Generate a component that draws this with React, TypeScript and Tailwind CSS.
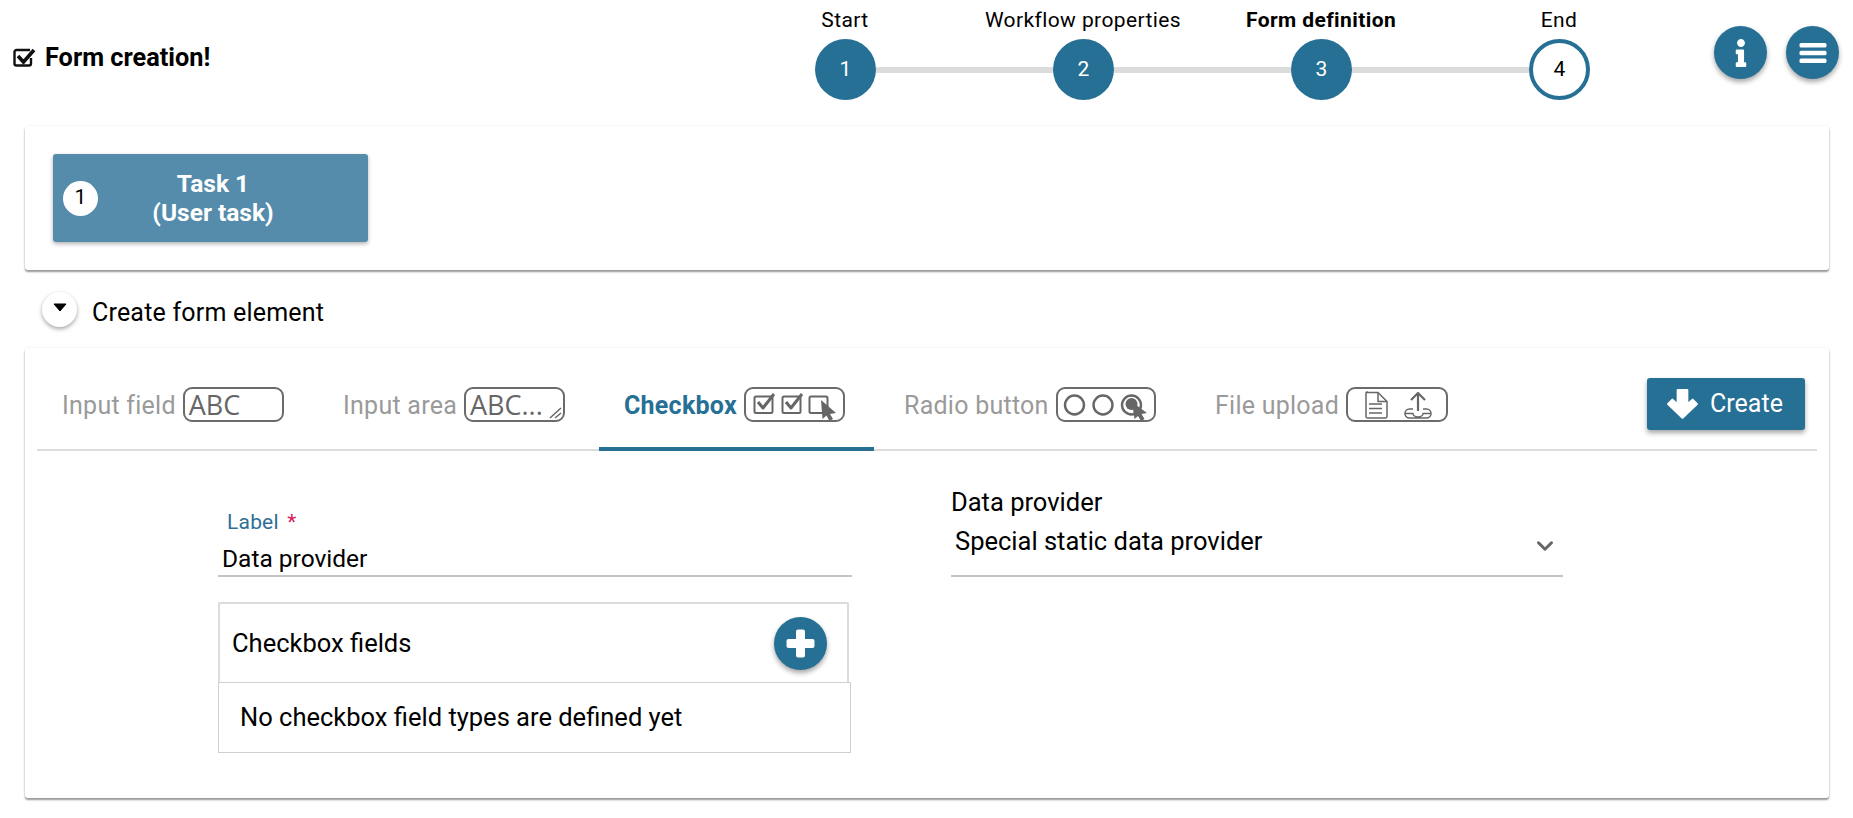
import { FC, ReactNode } from "react";
import { FaInfo } from "react-icons/fa";
import { LuChevronDown } from "react-icons/lu";

const steps = [
  { label: "Start", n: 1, done: true },
  { label: "Workflow properties", n: 2, done: true },
  { label: "Form definition", n: 3, done: true, bold: true },
  { label: "End", n: 4, done: false },
];

const Stepper: FC = () => (
  <div className="w-[952px] shrink-0 pt-[8px]">
    <div className="grid grid-cols-4 h-[31px]">
      {steps.map((s) => (
        <div
          key={s.n}
          className={`text-center text-[21px] tracking-[0.4px] leading-[24px] text-black whitespace-nowrap ${s.bold ? "font-bold" : ""}`}
        >
          {s.label}
        </div>
      ))}
    </div>
    <div className="flex items-center pl-[89px] pr-[88px]">
      {steps.map((s, i) => (
        <div key={s.n} className={`flex items-center ${i < 3 ? "flex-1" : ""}`}>
          <div
            className={`w-[61px] h-[61px] rounded-full flex items-center justify-center text-[21px] shrink-0 ${
              s.done ? "bg-[#266f95] text-white" : "bg-white border-[4px] border-[#266f95] text-black"
            }`}
          >
            {s.n}
          </div>
          {i < 3 && <div className="flex-1 h-[6px] bg-[#dcdcdc]" />}
        </div>
      ))}
    </div>
  </div>
);

const RoundButton: FC<{ children: ReactNode }> = ({ children }) => (
  <button className="w-[53px] h-[53px] rounded-full bg-[#266f95] text-white flex items-center justify-center shadow-[0_3px_5px_rgba(0,0,0,0.35)] shrink-0">
    {children}
  </button>
);

const IconBox: FC<{ width: string; children: ReactNode }> = ({ width, children }) => (
  <div className={`${width} relative h-[35px] border-[2px] border-[#6b6b6b] rounded-[9px] flex items-center text-[#666] shrink-0 overflow-hidden`}>
    {children}
  </div>
);

const line = { fill: "none", stroke: "#666", strokeWidth: 2, strokeLinejoin: "round" as const };
const thin = { fill: "none", stroke: "#666", strokeWidth: 1.5, strokeLinejoin: "round" as const };

const CheckboxIcon = () => (
  <svg viewBox="2 2 97 31" className="w-full h-full block">
    <rect x="10.5" y="9.5" width="18" height="16.5" rx="1.5" {...line} />
    <path d="M14 15 l5 6 l11 -14" {...line} strokeWidth={3} />
    <rect x="38.5" y="9.5" width="18" height="16.5" rx="1.5" {...line} />
    <path d="M42 15 l5 6 l11 -14" {...line} strokeWidth={3} />
    <rect x="65.5" y="9.5" width="18" height="16.5" rx="1.5" {...line} />
    <path d="M77 13 L92 26 L86 27 L89 32 L85.5 34 L82.5 28.5 L78.5 32 Z" fill="#666" />
  </svg>
);

const RadioIcon = () => (
  <svg viewBox="2 2 96 31" className="w-full h-full block">
    <circle cx="18.5" cy="18" r="9.5" {...line} strokeWidth={2.4} />
    <circle cx="47" cy="18" r="9.5" {...line} strokeWidth={2.4} />
    <circle cx="75.5" cy="18" r="9.5" {...line} strokeWidth={2.4} />
    <circle cx="75.5" cy="17" r="6" fill="#666" />
    <path d="M76 15 L91 26 L85.5 27 L88.5 32 L85 34 L82 29 L78.5 32 Z" fill="#666" />
  </svg>
);

const UploadIcon = () => (
  <svg viewBox="2 2 98 31" className="w-full h-full block">
    <path d="M20 5.5 h12 l9 9 v15 a1.5 1.5 0 0 1 -1.5 1.5 h-18 a1.5 1.5 0 0 1 -1.5 -1.5 v-23 a1.5 1.5 0 0 1 1.5 -1.5 Z" {...thin} />
    <path d="M32 5.5 v9 h9" {...thin} />
    <path d="M23 17 h13 M23 21.5 h13 M23 26 h13" {...thin} strokeWidth={1.4} />
    <path d="M72 24 V6 M65 13 l7 -7 l7 7" {...line} strokeWidth={2.2} />
    <path d="M67 22 h-3.5 a4.5 4.5 0 0 0 -4.5 4.5 a4.5 4.5 0 0 0 4.5 4.5 h17 a4.5 4.5 0 0 0 4.5 -4.5 a4.5 4.5 0 0 0 -4.5 -4.5 h-3.5 M59 26.5 h8 a5 3.5 0 0 0 10 0 h8" {...thin} />
  </svg>
);

const AbcIcon = () => (
  <IconBox width="w-[101px]">
    <span className="pl-[4px] text-[27px] leading-none font-['Open_Sans',sans-serif]">ABC</span>
  </IconBox>
);

const AbcAreaIcon = () => (
  <IconBox width="w-[101px]">
    <span className="pl-[4px] text-[27px] leading-none font-['Open_Sans',sans-serif]">ABC...</span>
    <svg width="14" height="14" viewBox="0 0 14 14" className="absolute right-[1px] bottom-[1px]">
      <path d="M2 13 L13 3 M7 13 L13 8" {...thin} />
    </svg>
  </IconBox>
);

const tabs: { label: string; width: string; gap: string; active?: boolean; icon: ReactNode }[] = [
  { label: "Input field", width: "w-[281px]", gap: "pl-[25px]", icon: <AbcIcon /> },
  { label: "Input area", width: "w-[281px]", gap: "pl-[25px]", icon: <AbcAreaIcon /> },
  {
    label: "Checkbox",
    width: "w-[275px]",
    gap: "pl-[25px]",
    active: true,
    icon: (
      <IconBox width="w-[101px]">
        <CheckboxIcon />
      </IconBox>
    ),
  },
  {
    label: "Radio button",
    width: "w-[306px]",
    gap: "pl-[30px]",
    icon: (
      <IconBox width="w-[100px]">
        <RadioIcon />
      </IconBox>
    ),
  },
  {
    label: "File upload",
    width: "w-[290px]",
    gap: "pl-[35px]",
    icon: (
      <IconBox width="w-[102px]">
        <UploadIcon />
      </IconBox>
    ),
  },
];

const Tabs: FC = () => (
  <div className="mx-[12px] h-[103px] border-b-[2px] border-[#dcdcdc] flex">
    {tabs.map((t) => (
      <div
        key={t.label}
        className={`${t.width} ${t.gap} pt-[39px] h-[103px] shrink-0 flex items-start gap-[7px] ${
          t.active ? "border-b-[4px] border-[#266f95]" : ""
        }`}
      >
        <span
          className={`text-[25px] tracking-[0.25px] leading-[34px] mt-[2px] whitespace-nowrap ${
            t.active ? "font-bold text-[#266f95]" : "text-[#9a9a9a]"
          }`}
        >
          {t.label}
        </span>
        {t.icon}
      </div>
    ))}
    <div className="flex-1 flex justify-end pt-[30px] pr-[12px]">
      <button className="w-[158px] h-[52px] pr-[3px] bg-[#266f95] rounded-[3px] text-white text-[25px] flex items-center justify-center gap-[11px] shadow-[0_3px_5px_rgba(0,0,0,0.35)]">
        <svg width="33" height="32" viewBox="0 0 31 30">
          <path d="M15.5 28 L2 15 L6 11 L11 15.5 V2 H20 V15.5 L25 11 L29 15 Z" fill="#fff" stroke="#fff" strokeWidth="2" strokeLinejoin="round" />
        </svg>
        Create
      </button>
    </div>
  </div>
);

const FormBody: FC = () => (
  <div className="pl-[193px] pt-[59px] flex">
    <div className="w-[634px] shrink-0">
      <div className="text-[21px] leading-[24px] text-[#2f6f95] pl-[9px] tracking-[0.2px]">
        Label <span className="text-[#d2225a] pl-[3px]">*</span>
      </div>
      <div className="h-[43px] pl-[4px] pt-[11px] text-[24.5px] leading-[28px] text-black border-b-[2px] border-[#c4c4c4]">
        Data provider
      </div>
      <div className="w-[631px] mt-[25px] h-[80px] border-[2px] border-b-0 border-[#dcdcdc] rounded-t-[2px] flex items-center justify-between pl-[12px] pr-[20px]">
        <span className="text-[25.5px] text-black">Checkbox fields</span>
        <RoundButton>
          <svg width="29" height="29" viewBox="0 0 29 29" fill="#fff">
            <rect x="10" y="0.5" width="9" height="28" rx="2" />
            <rect x="0.5" y="10" width="28" height="9" rx="2" />
          </svg>
        </RoundButton>
      </div>
      <div className="w-[633px] h-[71px] border border-[#cfcfcf] flex items-center pl-[21px] text-[25.5px] text-black whitespace-nowrap">
        No checkbox field types are defined yet
      </div>
    </div>
    <div className="ml-[99px] w-[612px] -mt-[22px] shrink-0">
      <div className="text-[25.5px] leading-[28px] text-black">Data provider</div>
      <div className="h-[61px] border-b-[2px] border-[#c4c4c4] flex justify-between pl-[4px] pr-[5px] pt-[11px]">
        <span className="text-[25.5px] leading-[28px] text-black">Special static data provider</span>
        <LuChevronDown className="w-[26px] h-[26px] text-[#666] mt-[6px]" strokeWidth={2.8} />
      </div>
    </div>
  </div>
);

export default function App() {
  return (
    <div className="w-[1853px] h-[818px] bg-white font-['Roboto',sans-serif] overflow-hidden">
      <header className="h-[126px] flex">
        <div className="w-[726px] shrink-0 flex items-start pt-[44px] pl-[13px] gap-[9px]">
          <svg width="23" height="20" viewBox="0 0 23 20" className="mt-[3px] shrink-0">
            <path d="M17 3 H3.5 A2 2 0 0 0 1.5 5 V16.5 A2 2 0 0 0 3.5 18.5 H16 A2 2 0 0 0 18 16.5 V11" fill="none" stroke="#111" strokeWidth="2.4" />
            <path d="M5 9 L10.5 15 L21 3" fill="none" stroke="#111" strokeWidth="3.6" />
          </svg>
          <span className="text-[25.3px] leading-[27px] font-bold text-black whitespace-nowrap">Form creation!</span>
        </div>
        <Stepper />
        <div className="flex gap-[19px] ml-[36px] pt-[26px] items-start">
          <RoundButton>
            <FaInfo className="w-[24px] h-[28px]" />
          </RoundButton>
          <RoundButton>
            <svg width="28" height="20" viewBox="0 0 28 20" fill="#fff">
              <rect x="0.5" y="0" width="27" height="4.5" rx="1.5" />
              <rect x="0.5" y="7.75" width="27" height="4.5" rx="1.5" />
              <rect x="0.5" y="15.5" width="27" height="4.5" rx="1.5" />
            </svg>
          </RoundButton>
        </div>
      </header>

      <div className="ml-[25px] mr-[24px] h-[144px] bg-white rounded-[3px] shadow-[0_2px_2px_rgba(0,0,0,0.4),0_0_3px_rgba(0,0,0,0.08)] pt-[28px] pl-[28px]">
        <div className="w-[315px] h-[88px] bg-[#558cab] rounded-[3px] shadow-[0_2px_4px_rgba(0,0,0,0.3)] flex items-center pl-[10px]">
          <div className="w-[35px] h-[35px] rounded-full bg-white text-black text-[21px] flex items-center justify-center shrink-0">
            1
          </div>
          <div className="flex-1 text-center text-white font-bold text-[24.5px] leading-[29px] pr-[40px]">
            Task 1
            <br />
            (User task)
          </div>
        </div>
      </div>

      <div className="h-[78px] pl-[42px] flex items-center gap-[15px]">
        <button className="w-[35px] h-[35px] rounded-full bg-white flex items-center justify-center shadow-[0_2px_4px_rgba(0,0,0,0.35)]">
          <svg width="14" height="9" viewBox="0 0 14 9" className="-mt-[3px]">
            <path d="M1 1 H13 L7 8 Z" fill="#000" stroke="#000" strokeLinejoin="round" />
          </svg>
        </button>
        <span className="text-[25px] tracking-[0.2px] text-black mt-[8px]">Create form element</span>
      </div>

      <div className="ml-[25px] mr-[24px] h-[450px] bg-white rounded-[3px] shadow-[0_2px_2px_rgba(0,0,0,0.4),0_0_3px_rgba(0,0,0,0.08)]">
        <Tabs />
        <FormBody />
      </div>
    </div>
  );
}
